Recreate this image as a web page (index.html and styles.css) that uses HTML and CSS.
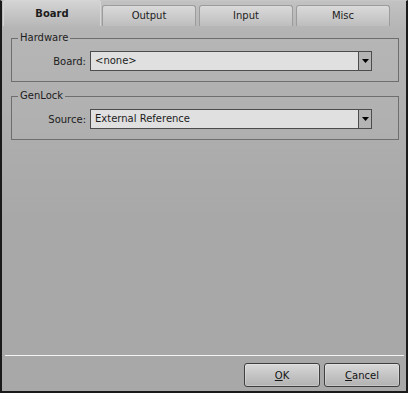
FILE: index.html
```html
<!DOCTYPE html>
<html lang="en">
<head>
    <meta charset="UTF-8">
    <title>Board Settings</title>
    <link rel="stylesheet" href="styles.css">
</head>
<body>
    <div class="window">
        <!-- Tabs -->
        <div class="tabs">
            <div class="tab active">Board</div>
            <div class="tab">Output</div>
            <div class="tab">Input</div>
            <div class="tab">Misc</div>
        </div>

        <!-- Board page -->
        <div class="page">
            <fieldset class="group">
                <legend>Hardware</legend>
                <div class="row">
                    <label>Board:</label>
                    <div class="combo">
                        <span class="value">&lt;none&gt;</span>
                        <span class="drop"><svg width="7" height="4" viewBox="0 0 7 4"><polygon points="0,0 7,0 3.5,4" fill="#000"/></svg></span>
                    </div>
                </div>
            </fieldset>

            <fieldset class="group">
                <legend>GenLock</legend>
                <div class="row">
                    <label>Source:</label>
                    <div class="combo">
                        <span class="value">External Reference</span>
                        <span class="drop"><svg width="7" height="4" viewBox="0 0 7 4"><polygon points="0,0 7,0 3.5,4" fill="#000"/></svg></span>
                    </div>
                </div>
            </fieldset>
        </div>

        <div class="separator"></div>

        <div class="footer">
            <button class="btn"><u>O</u>K</button>
            <button class="btn"><u>C</u>ancel</button>
        </div>
    </div>
</body>
</html>
```

FILE: styles.css
```css
/* General Styles */
body {
    margin: 0;
    padding: 0;
    font-family: 'DejaVu Sans', sans-serif;
    font-size: 10px;
    color: #1c1c1c;
    background-color: #a8a8a8;
}

.window {
    width: 408px;
    height: 393px;
    box-sizing: border-box;
    border-top: 1px solid #c6c6c6;
    border-left: 2px solid #1a1a1a;
    border-right: 2px solid #1a1a1a;
    border-bottom: 2px solid #1a1a1a;
    background: linear-gradient(#c2c2c2 0, #b4b4b4 30px, #adadad 140px, #a8a8a8 220px, #a8a8a8 100%);
    display: flex;
    flex-direction: column;
}

/* Tabs */
.tabs {
    display: flex;
    align-items: flex-end;
    gap: 3px;
    padding: 0 0 0 3px;
    height: 25px;
    box-sizing: border-box;
}

.tab {
    width: 94px;
    height: 21px;
    box-sizing: border-box;
    line-height: 19px;
    text-align: center;
    border: 1px solid #9c9c9c;
    border-bottom: none;
    border-radius: 3px 3px 0 0;
    background: linear-gradient(#dadada, #c9c9c9 60%, #bdbdbd);
}

.tab.active {
    width: 98px;
    height: 26px;
    margin: 0 -2px;
    line-height: 26px;
    font-weight: bold;
    border-color: #d6d6d6;
    background: linear-gradient(#d4d4d4, #c6c6c6 50%, #b8b8b8);
}

/* Page */
.page {
    flex: 1;
    padding: 6px 7px 0 9px;
}

.group {
    margin: 0 0 8px 0;
    padding: 7px 26px 10px 6px;
    border: 1px solid #6e6e6e;
    background-color: rgba(255, 255, 255, 0.03);
}

.group legend {
    padding: 0 2px;
    line-height: 12px;
    color: #1c1c1c;
}

.row {
    display: grid;
    grid-template-columns: 68px 1fr;
    gap: 4px;
    align-items: center;
}

.row label {
    text-align: right;
}

.combo {
    display: flex;
    height: 20px;
    box-sizing: border-box;
    border: 1px solid #4c4c4c;
    background-color: #e0e0e0;
}

.combo .value {
    flex: 1;
    padding-left: 4px;
    line-height: 18px;
}

.combo .drop {
    width: 12px;
    border-left: 1px solid #4c4c4c;
    background-color: #b4b4b4;
    display: flex;
    align-items: center;
    justify-content: center;
}

/* Footer */
.separator {
    height: 1px;
    margin: 0 2px 0 3px;
    background-color: #f4f4f4;
}

.footer {
    display: flex;
    justify-content: flex-end;
    gap: 4px;
    padding: 7px 6px 4px 0;
}

.btn {
    width: 76px;
    height: 24px;
    font-family: 'DejaVu Sans', sans-serif;
    font-size: 10px;
    color: #141414;
    border: 1px solid #3e3e3e;
    border-radius: 3px;
    background: linear-gradient(#d8d8d8, #c4c4c4 50%, #b2b2b2);
    box-shadow: inset 0 0 0 1px rgba(255, 255, 255, 0.25);
    padding: 0;
}
```
